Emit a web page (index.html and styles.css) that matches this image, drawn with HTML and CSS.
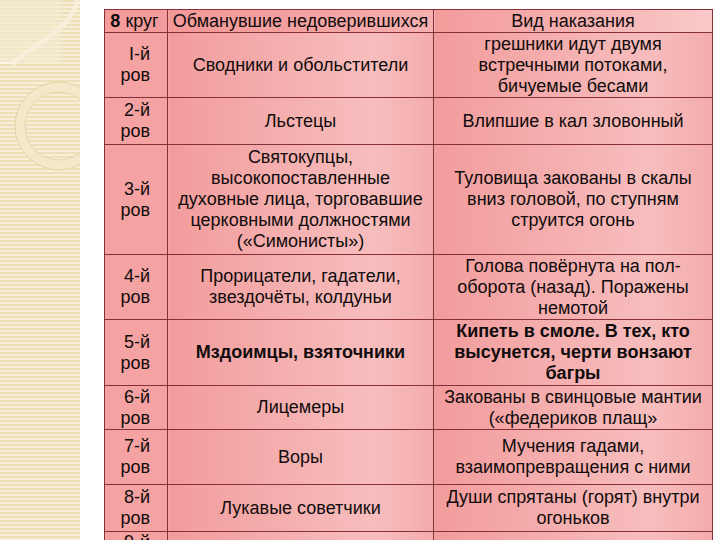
FILE: index.html
```html
<!DOCTYPE html>
<html lang="ru">
<head>
<meta charset="utf-8">
<title>8 круг</title>
<link rel="stylesheet" href="styles.css">
</head>
<body>
<div class="page">
  <aside class="strip">
    <svg class="deco" width="80" height="540" viewBox="0 0 80 540">
      <rect x="0" y="0" width="62" height="63" fill="#f4ebd2" opacity="0.55"/>
      <path d="M78 0 C70 30 40 40 12 64" fill="none" stroke="#f8f1de" stroke-width="5" opacity="0.8"/>
      <line x1="0" y1="63" x2="14" y2="63" stroke="#fbf6e8" stroke-width="2"/>
      <circle cx="59" cy="126" r="39" fill="none" stroke="#f3e8c9" stroke-width="10"/>
      <circle cx="59" cy="126" r="44" fill="none" stroke="#e3d3a6" stroke-width="1"/>
      <circle cx="59" cy="126" r="34" fill="none" stroke="#e6d7ad" stroke-width="1"/>
    </svg>
  </aside>
  <main class="content">
    <table class="hell">
      <colgroup>
        <col class="c1"><col class="c2"><col class="c3">
      </colgroup>
      <thead>
        <tr class="rh">
          <th class="lbl-h"><b>8</b> круг</th>
          <th>Обманувшие недоверившихся</th>
          <th class="light">Вид наказания</th>
        </tr>
      </thead>
      <tbody>
        <tr class="r65">
          <td class="lbl">I-й<br>ров</td>
          <td>Сводники и обольстители</td>
          <td>грешники идут двумя<br>встречными потоками,<br>бичуемые бесами</td>
        </tr>
        <tr class="r47">
          <td class="lbl">2-й<br>ров</td>
          <td>Льстецы</td>
          <td>Влипшие в кал зловонный</td>
        </tr>
        <tr class="r110">
          <td class="lbl">3-й<br>ров</td>
          <td>Святокупцы,<br>высокопоставленные<br>духовные лица, торговавшие<br>церковными должностями<br>(«Симонисты»)</td>
          <td>Туловища закованы в скалы<br>вниз головой, по ступням<br>струится огонь</td>
        </tr>
        <tr class="r65">
          <td class="lbl">4-й<br>ров</td>
          <td>Прорицатели, гадатели,<br>звездочёты, колдуньи</td>
          <td>Голова повёрнута на пол-<br>оборота (назад). Поражены<br>немотой</td>
        </tr>
        <tr class="r66">
          <td class="lbl">5-й<br>ров</td>
          <td class="bold">Мздоимцы, взяточники</td>
          <td class="bold">Кипеть в смоле. В тех, кто<br>высунется, черти вонзают<br>багры</td>
        </tr>
        <tr class="r44">
          <td class="lbl">6-й<br>ров</td>
          <td>Лицемеры</td>
          <td>Закованы в свинцовые мантии<br>(«федериков плащ»</td>
        </tr>
        <tr class="r55">
          <td class="lbl">7-й<br>ров</td>
          <td>Воры</td>
          <td>Мучения гадами,<br>взаимопревращения с ними</td>
        </tr>
        <tr class="r47">
          <td class="lbl">8-й<br>ров</td>
          <td>Лукавые советчики</td>
          <td>Души спрятаны (горят) внутри<br>огоньков</td>
        </tr>
        <tr class="r70">
          <td class="lbl top">9-й<br>ров</td>
          <td></td>
          <td></td>
        </tr>
      </tbody>
    </table>
  </main>
</div>
</body>
</html>
```
FILE: styles.css
```css
html, body {
  margin: 0;
  padding: 0;
  height: 540px;
  overflow: hidden;
  background: #ffffff;
}

.page {
  display: flex;
  height: 540px;
}

.strip {
  width: 80px;
  flex: none;
  height: 540px;
  background:
    repeating-linear-gradient(180deg, #ede0b8 0, #ede0b8 2px, #f6eed7 2px, #f6eed7 4px);
}

.deco {
  display: block;
}

.content {
  padding: 9px 0 0 24px;
}

.hell {
  border-collapse: collapse;
  table-layout: fixed;
  width: 608px;
  font-family: "Liberation Sans", Arial, sans-serif;
  font-size: 18px;
  line-height: 21px;
  color: #110c0c;
}

.c1 { width: 63px; }
.c2 { width: 266px; }
.c3 { width: 279px; }

.hell th,
.hell td {
  border: 1px solid #86303a;
  padding: 0 3px;
  text-align: center;
  vertical-align: middle;
  font-weight: normal;
  background: linear-gradient(90deg, #f29c9c 0%, #f5afaf 45%, #f7bdbd 78%, #f4abab 100%);
}

.hell th {
  background: linear-gradient(90deg, #f39898 0%, #f4a3a3 60%, #f6b0b0 100%);
  white-space: nowrap;
}

.hell th.light {
  background: linear-gradient(90deg, #f49c9c 0%, #f6b4b4 60%, #f9caca 100%);
}

.hell th.lbl-h {
  padding: 0 3px 0 0;
  background: #f49b9b;
}

.hell td.lbl {
  text-align: right;
  padding: 0 17px 0 0;
  line-height: 21px;
  background: #f4a2a2;
}

.hell td.top {
  vertical-align: top;
}

.hell td.bold {
  font-weight: bold;
}

.rh { height: 23px; }
.r44 { height: 44px; }
.r47 { height: 47px; }
.r55 { height: 55px; }
.r65 { height: 65px; }
.r66 { height: 66px; }
.r70 { height: 70px; }
.r110 { height: 110px; }
```
